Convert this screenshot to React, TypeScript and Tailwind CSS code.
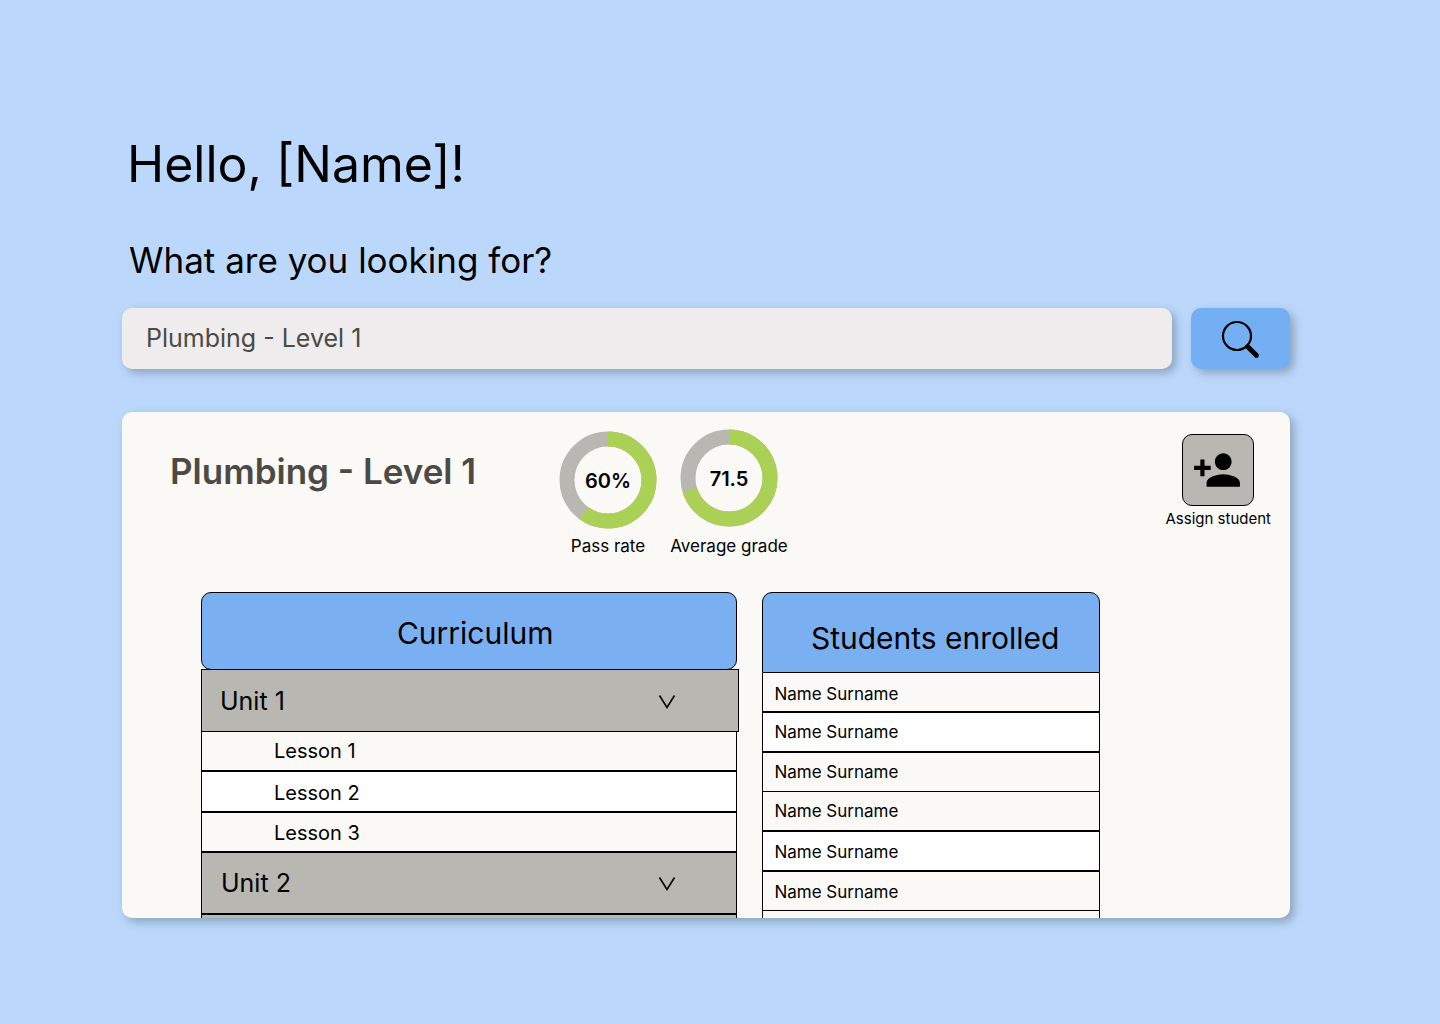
import { MdPersonAdd } from "react-icons/md";

const STUDENT_ROWS = [
  { name: "Name Surname", row: "h-10 border-b-2 bg-[#faf9f5] pt-1" },
  { name: "Name Surname", row: "h-10 border-b-2 bg-white" },
  { name: "Name Surname", row: "h-[39px] border-b bg-[#faf9f5]" },
  { name: "Name Surname", row: "h-10 border-b-2 bg-[#faf9f5]" },
  { name: "Name Surname", row: "h-10 border-b-2 bg-white pt-0.5" },
  { name: "Name Surname", row: "h-[39px] border-b bg-[#faf9f5] pt-0.5" },
  { name: "", row: "h-10 border-b-2 bg-[#faf9f5]" },
];

function SearchIcon() {
  return (
    <svg className="mr-0.5" width="40" height="40" viewBox="0 0 40 40" fill="none" stroke="black" aria-hidden="true">
      <circle cx="17" cy="17" r="14" strokeWidth="2.2" />
      <path d="M28 28L36.5 36.5" strokeWidth="4.8" strokeLinecap="round" />
      <path d="M26 26L30 30" strokeWidth="4" />
    </svg>
  );
}

function Chevron() {
  return (
    <svg width="18" height="16" viewBox="0 0 18 16" fill="none" stroke="black" strokeWidth="1.6" aria-hidden="true">
      <path d="M1.5 1.5L9 13.5L16.5 1.5" />
    </svg>
  );
}

function Gauge({ percent, value, label }: { percent: number; value: string; label: string }) {
  const circumference = 2 * Math.PI * 41;
  return (
    <figure className="flex h-full flex-col items-center justify-between">
      <div className="grid place-items-center">
        <svg className="col-start-1 row-start-1 size-[98px] -rotate-90" viewBox="0 0 98 98" fill="none" strokeWidth="15" aria-hidden="true">
          <circle cx="49" cy="49" r="41" stroke="#b8b7b2" />
          <circle cx="49" cy="49" r="41" stroke="#aad156" strokeDasharray={`${(circumference * percent) / 100} ${circumference}`} />
        </svg>
        <span className="col-start-1 row-start-1 pt-0.5 text-[20px] leading-6 font-semibold">{value}</span>
      </div>
      <figcaption className="text-[17px] leading-6 whitespace-nowrap">{label}</figcaption>
    </figure>
  );
}

function Lesson({ name, tone }: { name: string; tone: string }) {
  return (
    <li className={`flex items-center border-x border-b-2 border-black pl-[72px] text-[20px] leading-6 ${tone}`}>
      <a href="#lesson">{name}</a>
    </li>
  );
}

export default function App() {
  return (
    <div className="min-h-screen bg-[#bbd8fc] pt-[134px] pr-[150px] pb-[106px] pl-[122px] font-['Inter',sans-serif] text-black">
      <h1 className="pl-[5px] text-[50px] leading-[60px]">Hello, [Name]!</h1>
      <form onSubmit={(e) => e.preventDefault()}>
        <label htmlFor="search" className="mt-11 block pl-[7px] text-[35px] leading-[44px]">
          What are you looking for?
        </label>
        <div className="mt-[26px] flex gap-[19px]">
          <input
            id="search"
            type="text"
            defaultValue="Plumbing - Level 1"
            className="h-[61px] min-w-0 flex-1 rounded-[10px] bg-[#eeecec] px-6 pb-0.5 text-[25px] text-[#4b4a45] shadow-[4px_4px_10px_rgba(0,0,0,0.25)] outline-none"
          />
          <button type="submit" aria-label="Search" className="flex h-[61px] w-[99px] items-center justify-center rounded-[10px] bg-[#74aef3] shadow-[4px_4px_10px_rgba(0,0,0,0.25)]">
            <SearchIcon />
          </button>
        </div>
      </form>

      <main className="mt-[43px] h-[506px] overflow-hidden rounded-[10px] bg-[#faf9f5] shadow-[4px_4px_10px_rgba(0,0,0,0.25)]">
        <header className="flex items-start pr-[19px] pl-12">
          <h2 className="mt-[37px] w-[380px] text-[35px] leading-[44px] font-semibold text-[#4b4a45]">Plumbing - Level 1</h2>
          <div className="flex h-[146px] gap-1">
            <div className="w-[116px] pt-[19px]">
              <Gauge percent={60} value="60%" label="Pass rate" />
            </div>
            <div className="w-[118px] pt-[17px]">
              <Gauge percent={70} value="71.5" label="Average grade" />
            </div>
          </div>
          <div className="ml-auto flex flex-col items-center gap-1 pt-[22px]">
            <button type="button" aria-labelledby="assign-student" className="flex size-[72px] items-center justify-center rounded-[10px] border border-black bg-[#b8b7b2] pr-0.5">
              <MdPersonAdd size={50} />
            </button>
            <span id="assign-student" className="text-[15px] leading-[18px]">
              Assign student
            </span>
          </div>
        </header>

        <div className="mt-[34px] flex items-start gap-[25px] pr-[190px] pl-[79px]">
          <section className="flex-[537]">
            <h3 className="h-[78px] rounded-[10px] border border-black bg-[#7aaff1] pt-[22px] pl-3 text-center text-[30px] leading-9">Curriculum</h3>
            <button type="button" className="-mt-px -mr-[2px] flex h-[63px] w-[calc(100%+2px)] items-center justify-between border border-black bg-[#b8b7b2] pt-0.5 pr-[62px] pl-[18px] text-[25px]">
              Unit 1
              <Chevron />
            </button>
            <ul className="grid grid-rows-[40px_41px_40px]">
              <Lesson name="Lesson 1" tone="bg-[#faf9f5]" />
              <Lesson name="Lesson 2" tone="bg-white pt-0.5" />
              <Lesson name="Lesson 3" tone="bg-[#faf9f5] pt-0.5" />
            </ul>
            <button type="button" className="flex h-[62px] w-full items-center justify-between border-x border-b-2 border-black bg-[#b8b7b2] pt-0.5 pr-[60px] pl-[19px] text-[25px]">
              Unit 2
              <Chevron />
            </button>
            <div className="h-[62px] border-x border-b-2 border-black bg-[#b8b7b2]" />
          </section>

          <table className="flex-[338] border-separate border-spacing-0">
            <thead>
              <tr>
                <th scope="col" className="h-[81px] rounded-t-[10px] border border-black bg-[#7aaff1] pt-2.5 pl-2 text-center text-[30px] leading-9 font-normal">
                  Students enrolled
                </th>
              </tr>
            </thead>
            <tbody>
              {STUDENT_ROWS.map((student, i) => (
                <tr key={i}>
                  <td className={`border-x border-black pl-[11px] text-[17px] leading-6 ${student.row}`}>{student.name}</td>
                </tr>
              ))}
            </tbody>
          </table>
        </div>
      </main>
    </div>
  );
}
